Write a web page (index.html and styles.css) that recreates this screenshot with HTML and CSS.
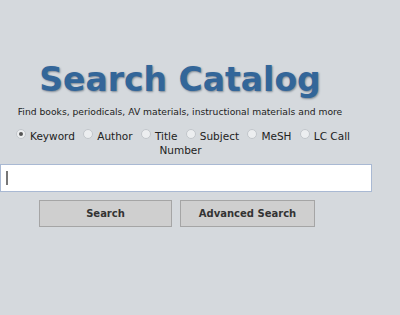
FILE: index.html
```html
<!DOCTYPE html>
<html>
<head>
<meta charset="utf-8">
<link rel="stylesheet" href="styles.css">
</head>
<body>
<div class="catalog">
  <h1 class="title">Search Catalog</h1>
  <p class="subtitle">Find books, periodicals, AV materials, instructional materials and more</p>
  <div class="options">
    <label class="opt"><span class="radio checked"></span>Keyword</label>
    <label class="opt"><span class="radio"></span>Author</label>
    <label class="opt"><span class="radio"></span>Title</label>
    <label class="opt"><span class="radio"></span>Subject</label>
    <label class="opt"><span class="radio"></span>MeSH</label>
    <label class="opt"><span class="radio"></span>LC Call Number</label>
  </div>
  <div class="field"><span class="caret"></span></div>
  <div class="buttons">
    <button class="btn btn-search">Search</button>
    <button class="btn btn-adv">Advanced Search</button>
  </div>
</div>
</body>
</html>
```
FILE: styles.css
```css
html, body {
  margin: 0;
  padding: 0;
  background: #d5d9dd;
  font-family: "DejaVu Sans", Verdana, sans-serif;
}
.catalog {
  width: 360px;
  padding-top: 58px;
  text-align: center;
}
.title {
  margin: 0;
  font-size: 33px;
  font-weight: bold;
  color: #336699;
  line-height: 44px;
  text-shadow: 1px 1px 2px #7d8894;
}
.subtitle {
  margin: 3px 0 0;
  font-size: 9.2px;
  color: #222;
  line-height: 14px;
}
.options {
  margin: 10px 6px 0 12px;
  font-size: 10.5px;
  color: #222;
  line-height: 14px;
}
.opt {
  margin-right: 5px;
}
.radio {
  display: inline-block;
  width: 8px;
  height: 8px;
  border: 1px solid #c2c6cb;
  border-radius: 50%;
  background: #eceef0;
  margin-right: 4px;
  vertical-align: 1px;
  position: relative;
}
.radio.checked::after {
  content: "";
  position: absolute;
  left: 2px;
  top: 2px;
  width: 4px;
  height: 4px;
  border-radius: 50%;
  background: #555;
}
.field {
  margin-top: 7px;
  width: 365px;
  height: 26px;
  background: #fff;
  border: 1px solid #a9b9d3;
  display: flex;
  align-items: center;
  padding-left: 5px;
}
.caret {
  width: 2px;
  height: 14px;
  background: #777;
}
.buttons {
  display: flex;
  gap: 8px;
  margin-top: 8px;
  padding-left: 39px;
}
.btn {
  height: 27px;
  background: #cfcfcf;
  border: 1px solid #a5a5a5;
  font-family: "DejaVu Sans", Verdana, sans-serif;
  font-weight: bold;
  font-size: 10px;
  color: #333;
  padding: 0;
}
.btn-search { width: 133px; }
.btn-adv { width: 135px; }
```
